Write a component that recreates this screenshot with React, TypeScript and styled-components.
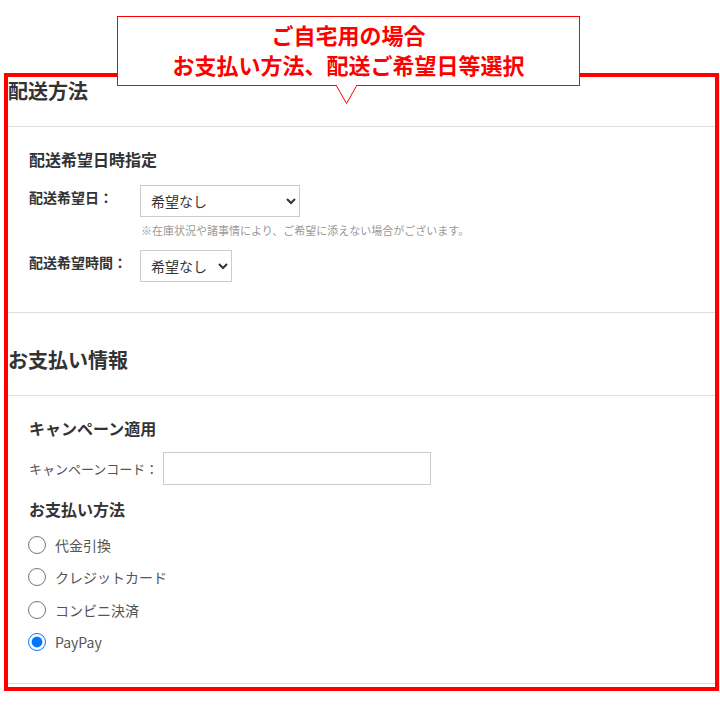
import React from "react";
import styled, { createGlobalStyle } from "styled-components";

const GlobalStyle = createGlobalStyle`
  html, body { margin: 0; padding: 0; background: #fff; }
  body {
    font-family: "Noto Sans CJK JP", "Noto Sans", sans-serif;
    color: #333;
  }
`;

const Page = styled.div`
  position: relative;
  width: 720px;
  height: 720px;
  overflow: hidden;
  box-sizing: border-box;
  padding: 44px 5px 0 8px;
`;

const Section = styled.section``;

const SectionHeader = styled.div`
  padding: 33px 0 21px;
  border-bottom: 1px solid #ddd;
`;

const SectionTitle = styled.h2`
  margin: 0;
  font-size: 20px;
  line-height: 28px;
  font-weight: 700;
  color: #333;
`;

const SectionBody = styled.div<{ $bottom: number }>`
  padding: 20px 0 ${(p) => p.$bottom}px 21px;
  border-bottom: 1px solid #ddd;
`;

const SubTitle = styled.h3<{ $mb: number }>`
  margin: 0 0 ${(p) => p.$mb}px;
  font-size: 16px;
  line-height: 24px;
  font-weight: 700;
  color: #333;
`;

const FieldRow = styled.div<{ $mb?: number }>`
  display: flex;
  align-items: flex-start;
  margin-bottom: ${(p) => p.$mb ?? 0}px;
`;

const FieldLabel = styled.div`
  width: 111px;
  flex: none;
  font-size: 14px;
  line-height: 24px;
  font-weight: 700;
  color: #333;
`;

const FieldControl = styled.div`
  display: flex;
  flex-direction: column;
  align-items: flex-start;
`;

const Select = styled.select<{ $w?: number }>`
  height: 32px;
  ${(p) => (p.$w ? `width: ${p.$w}px;` : "")}
  box-sizing: border-box;
  border: 1px solid #ccc;
  border-radius: 0;
  background: #fff;
  padding: 0 4px 0 6px;
  font-family: "Noto Sans CJK JP", sans-serif;
  font-size: 14px;
  color: #333;
  margin: 0;
`;

const Note = styled.p`
  margin: 5px 0 0 1px;
  font-size: 11px;
  line-height: 16px;
  color: #999;
`;

const CodeRow = styled.div`
  display: flex;
  align-items: center;
  margin-bottom: 12px;
`;

const CodeLabel = styled.label`
  font-size: 13px;
  line-height: 20px;
  color: #555;
  margin-right: 5px;
`;

const TextInput = styled.input`
  width: 268px;
  height: 33px;
  box-sizing: border-box;
  border: 1px solid #ccc;
  border-radius: 0;
  margin: 0;
  padding: 0 6px;
  font-size: 14px;
`;

const RadioList = styled.div`
  display: flex;
  flex-direction: column;
  margin-top: 8px;
`;

const RadioRow = styled.label`
  display: flex;
  align-items: center;
  height: 32.3px;
  font-size: 14px;
  color: #555;
`;

const Radio = styled.input`
  width: 18px;
  height: 18px;
  margin: 0 9px 0 -1px;
  flex: none;
`;

const Frame = styled.div`
  position: absolute;
  left: 4px;
  top: 73px;
  width: 715px;
  height: 618px;
  box-sizing: border-box;
  border: 4px solid #ff0000;
  pointer-events: none;
`;

const Callout = styled.div`
  position: absolute;
  left: 117px;
  top: 16px;
  width: 463px;
  height: 70px;
  box-sizing: border-box;
  border: 1px solid #ff0000;
  background: #fff;
  padding-top: 2px;
  text-align: center;
  color: #ff0000;
  font-size: 22px;
  line-height: 30px;
  font-weight: 700;
`;

const Pointer = styled.svg`
  position: absolute;
  left: 218px;
  top: 68px;
  overflow: visible;
`;

const options = ["希望なし"];

export default function App() {
  return (
    <>
      <GlobalStyle />
      <Page>
        <Section>
          <SectionHeader>
            <SectionTitle>配送方法</SectionTitle>
          </SectionHeader>
          <SectionBody $bottom={30}>
            <SubTitle $mb={14}>配送希望日時指定</SubTitle>
            <FieldRow $mb={12}>
              <FieldLabel>配送希望日：</FieldLabel>
              <FieldControl>
                <Select $w={160} defaultValue="希望なし">
                  {options.map((o) => (
                    <option key={o}>{o}</option>
                  ))}
                </Select>
                <Note>※在庫状況や諸事情により、ご希望に添えない場合がございます。</Note>
              </FieldControl>
            </FieldRow>
            <FieldRow>
              <FieldLabel>配送希望時間：</FieldLabel>
              <FieldControl>
                <Select $w={92} defaultValue="希望なし">
                  {options.map((o) => (
                    <option key={o}>{o}</option>
                  ))}
                </Select>
              </FieldControl>
            </FieldRow>
          </SectionBody>
        </Section>
        <Section>
          <SectionHeader>
            <SectionTitle>お支払い情報</SectionTitle>
          </SectionHeader>
          <SectionBody $bottom={25}>
            <SubTitle $mb={12}>キャンペーン適用</SubTitle>
            <CodeRow>
              <CodeLabel>キャンペーンコード：</CodeLabel>
              <TextInput type="text" />
            </CodeRow>
            <SubTitle $mb={0}>お支払い方法</SubTitle>
            <RadioList>
              {["代金引換", "クレジットカード", "コンビニ決済", "PayPay"].map((m) => (
                <RadioRow key={m}>
                  <Radio type="radio" name="pay" defaultChecked={m === "PayPay"} />
                  {m}
                </RadioRow>
              ))}
            </RadioList>
          </SectionBody>
        </Section>
        <Frame />
        <Callout>
          ご自宅用の場合
          <br />
          お支払い方法、配送ご希望日等選択
          <Pointer width="22" height="20" viewBox="0 0 22 20">
            <polygon points="0,0 21,0 10.5,18.5" fill="#fff" />
            <polyline points="0,0 10.5,18.5 21,0" fill="none" stroke="#ff0000" strokeWidth="1" />
          </Pointer>
        </Callout>
      </Page>
    </>
  );
}
